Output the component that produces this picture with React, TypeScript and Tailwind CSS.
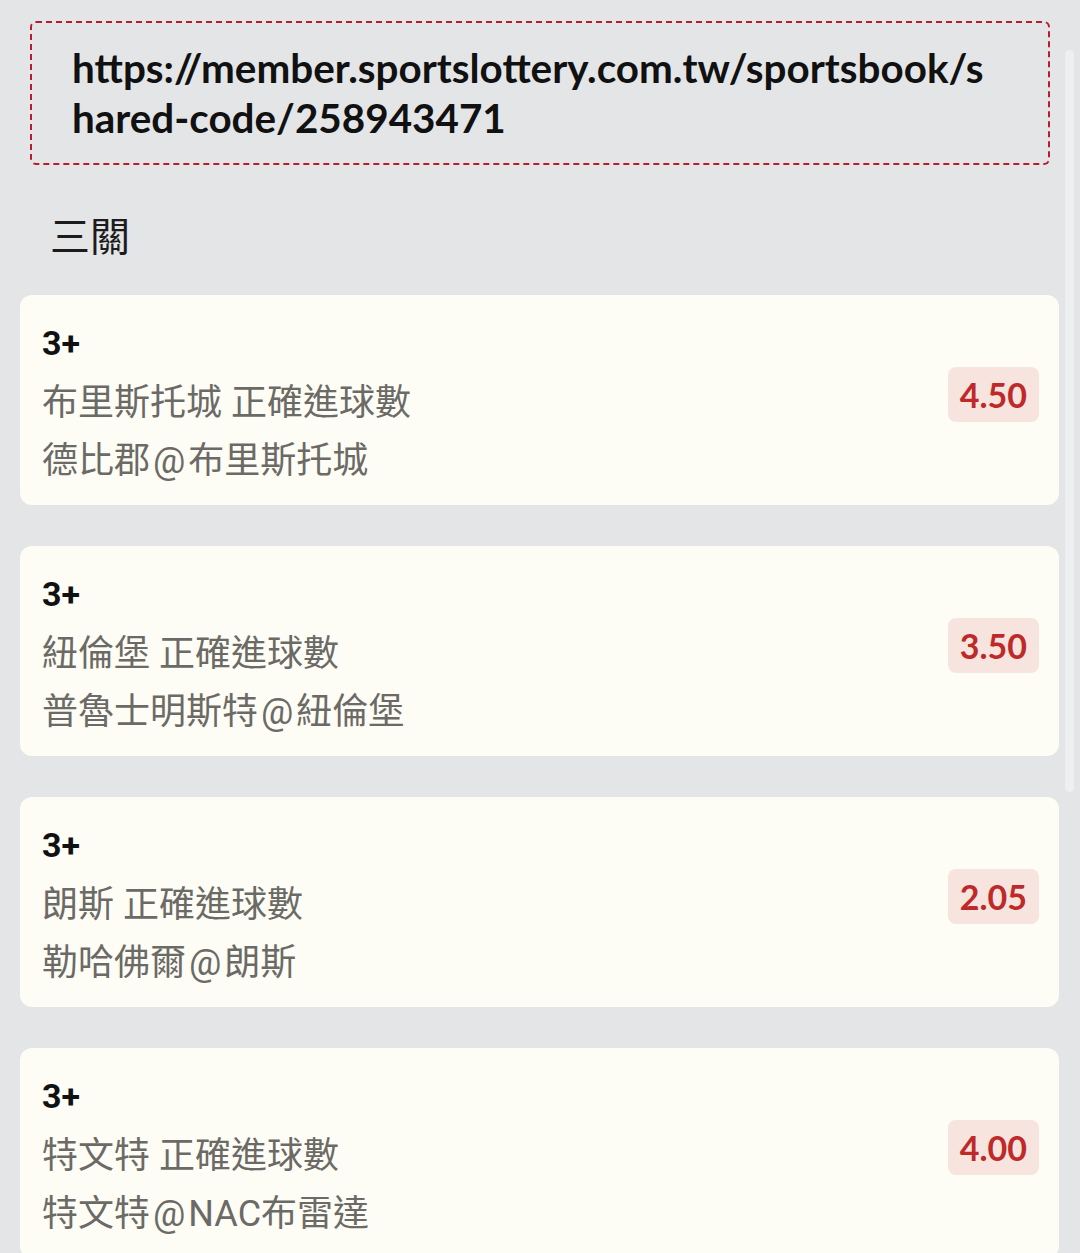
import React from "react";

type Leg = {
  pick: string;
  market: string;
  away: string;
  home: string;
  odds: string;
};

const LEGS: Leg[] = [
  { pick: "3+", market: "布里斯托城 正確進球數", away: "德比郡", home: "布里斯托城", odds: "4.50" },
  { pick: "3+", market: "紐倫堡 正確進球數", away: "普魯士明斯特", home: "紐倫堡", odds: "3.50" },
  { pick: "3+", market: "朗斯 正確進球數", away: "勒哈佛爾", home: "朗斯", odds: "2.05" },
  { pick: "3+", market: "特文特 正確進球數", away: "特文特", home: "NAC布雷達", odds: "4.00" },
];

const SANS = "font-['Roboto','Noto_Sans_CJK_TC',sans-serif]";

function LegCard({ leg }: { leg: Leg }) {
  return (
    <article className="flex items-center justify-between rounded-[12px] bg-[#fefdf5] pb-[16px] pl-[22px] pr-[20px] pt-[18px]">
      <div className={`${SANS} text-[36px]`}>
        <p className="text-[34px] font-bold leading-[60px] text-[#111111]">{leg.pick}</p>
        <p className="leading-[60px] text-[#6b6a66]">{leg.market}</p>
        <p className="leading-[56px] text-[#6b6a66]">
          {leg.away}
          <span className="mx-[3px]">@</span>
          {leg.home}
        </p>
      </div>

      <span className="mb-[14px] rounded-[8px] bg-[#f7e4df] px-[12px] py-[7px] font-['Lato',sans-serif] text-[34px] font-bold leading-[41px] text-[#bd2a29]">
        {leg.odds}
      </span>
    </article>
  );
}

export default function App() {
  return (
    <div className="relative min-h-[1253px] overflow-hidden bg-[#e4e5e7] pt-[21px]">
      <div className="mx-[30px] rounded-[6px] border-2 border-dashed border-[#b81d2d] py-5 pl-10 pr-4">
        <p className="font-['Lato',sans-serif] text-[40.4px] font-bold leading-[50px] text-[#111111]">
          https://member.sportslottery.com.tw/sportsbook/s
          <br />
          hared-code/258943471
        </p>
      </div>

      <h2 className="mt-[44px] pl-[50px] font-['Noto_Sans_CJK_TC',sans-serif] text-[40px] leading-[50px] text-[#1c1c1c]">
        三關
      </h2>

      <div className="mt-[36px] flex flex-col gap-[41px] pl-[20px] pr-[21px]">
        {LEGS.map((leg, i) => (
          <LegCard key={i} leg={leg} />
        ))}
      </div>

      <div className="absolute right-[6px] top-[50px] h-[742px] w-[9px] rounded-full bg-[#eeeff1]" />
    </div>
  );
}
